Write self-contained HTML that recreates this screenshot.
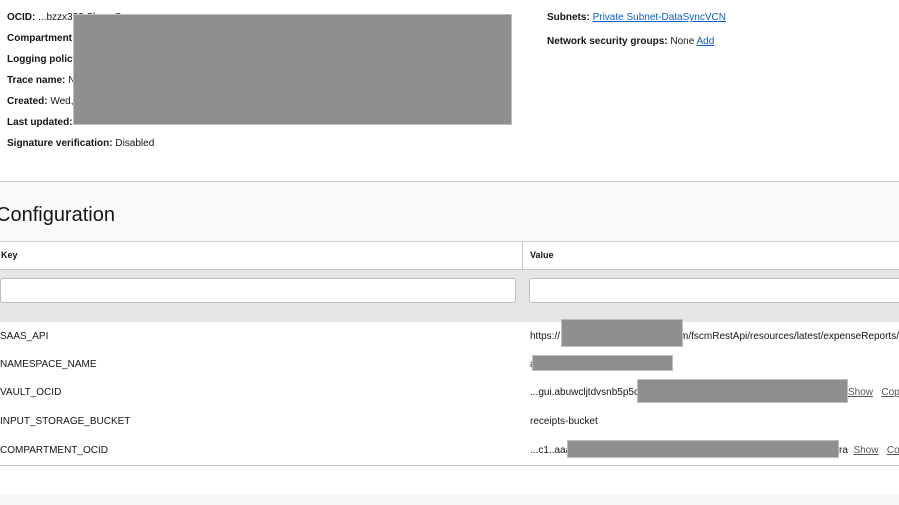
<!DOCTYPE html>
<html><head><style>
body{margin:0;width:899px;height:505px;overflow:hidden;background:#fff;font-family:"Liberation Sans",Arial,sans-serif;font-size:10px;color:#161513;position:relative}
.a{position:absolute;white-space:nowrap}
b{font-weight:bold}
.r{position:absolute;background:#8f8f8f;border:1px solid #bdbdbd;box-sizing:border-box}
a{color:#0b5fc5;text-decoration:underline}
.u{color:#555;text-decoration:underline}
</style></head><body>
<div class="a" style="left:7px;top:12px"><b>OCID:</b> ...bzzx3??  Show  Copy</div>
<div class="a" style="left:7px;top:33px"><b>Compartment:</b></div>
<div class="a" style="left:7px;top:54px"><b>Logging policy:</b></div>
<div class="a" style="left:7px;top:75px"><b>Trace name:</b> N</div>
<div class="a" style="left:7px;top:96px"><b>Created:</b> Wed,</div>
<div class="a" style="left:7px;top:117px"><b>Last updated:</b></div>
<div class="a" style="left:7px;top:138px"><b>Signature verification:</b> Disabled</div>
<div class="r" style="left:73px;top:14px;width:439px;height:111px"></div>
<div class="a" style="left:547px;top:12px"><b>Subnets:</b> <a>Private Subnet-DataSyncVCN</a></div>
<div class="a" style="left:547px;top:36px"><b>Network security groups:</b> None <a>Add</a></div>

<div class="a" style="left:0;top:181px;width:899px;height:59px;background:#fafafa;border-top:1px solid #c8c8c8;border-bottom:1px solid #d8d8d8"></div>
<div class="a" style="left:-4px;top:204px;font-size:20px;color:#161513">Configuration</div>
<div class="a" style="left:0;top:242px;width:899px;height:27px;background:#fff;border-bottom:1px solid #c8c8c8"></div>
<div class="a" style="left:522px;top:242px;width:1px;height:27px;background:#c8c8c8"></div>
<div class="a" style="left:1px;top:250px;font-weight:bold;font-size:9px">Key</div>
<div class="a" style="left:530px;top:250px;font-weight:bold;font-size:9px">Value</div>
<div class="a" style="left:0;top:270px;width:899px;height:52px;background:#e6e6e6"></div>
<div class="a" style="left:0;top:278px;width:516px;height:25px;background:#fff;border:1px solid #bbb;border-radius:3px;box-sizing:border-box"></div>
<div class="a" style="left:529px;top:278px;width:380px;height:25px;background:#fff;border:1px solid #bbb;border-radius:3px;box-sizing:border-box"></div>

<div class="a" style="left:0;top:331px">SAAS_API</div>
<div class="a" style="left:0;top:359px">NAMESPACE_NAME</div>
<div class="a" style="left:0;top:387px">VAULT_OCID</div>
<div class="a" style="left:0;top:416px">INPUT_STORAGE_BUCKET</div>
<div class="a" style="left:0;top:445px">COMPARTMENT_OCID</div>

<div class="a" style="left:530px;top:331px">https://</div>
<div class="a" style="left:680px;top:331px">m/fscmRestApi/resources/latest/expenseReports/</div>
<div class="r" style="left:561px;top:319px;width:122px;height:28px"></div>
<div class="a" style="left:530px;top:359px">a</div>
<div class="r" style="left:532px;top:355px;width:141px;height:16px"></div>
<div class="a" style="left:530px;top:387px">...gui.abuwcljtdvsnb5p5c</div>
<div class="r" style="left:637px;top:379px;width:211px;height:24px"></div>
<div class="a" style="left:848px;top:387px"><span class="u">Show</span>&nbsp;&nbsp;&nbsp;<span class="u">Copy</span></div>
<div class="a" style="left:530px;top:416px">receipts-bucket</div>
<div class="a" style="left:530px;top:445px">...c1..aaa</div>
<div class="r" style="left:567px;top:440px;width:272px;height:18px"></div>
<div class="a" style="left:839px;top:445px">ra&nbsp;&nbsp;<span class="u">Show</span>&nbsp;&nbsp;&nbsp;<span class="u">Copy</span></div>

<div class="a" style="left:0;top:465px;width:899px;height:28px;background:#fff;border-top:1px solid #c8c8c8;border-bottom:1px solid #d8d8d8"></div>
<div class="a" style="left:0;top:494px;width:899px;height:11px;background:#f7f7f7"></div>
</body></html>
